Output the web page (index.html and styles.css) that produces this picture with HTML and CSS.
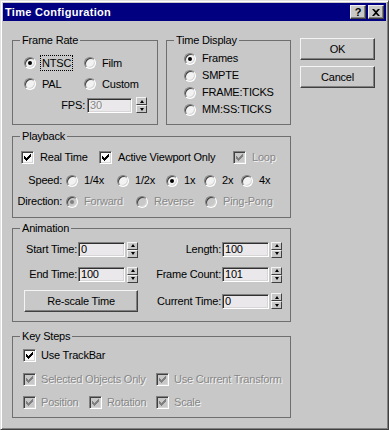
FILE: index.html
```html
<!DOCTYPE html>
<html>
<head>
<meta charset="utf-8">
<link rel="stylesheet" href="styles.css">
</head>
<body>
<div class="win">
  <div class="title">
    <span class="ttl">Time Configuration</span>
    <div class="capbtns">
      <span class="capbtn q">?</span>
      <span class="capbtn"><svg width="8" height="7" viewBox="0 0 8 7"><path d="M0 0h2l2 2 2-2h2L5 3.5 8 7H6L4 5 2 7H0l3-3.5z" fill="#000"/></svg></span>
    </div>
  </div>
  <div class="body">
    <div class="groups">
      <div class="toprow">
        <fieldset class="grp fr">
          <legend>Frame Rate</legend>
          <div class="fr-in">
            <div class="fr-grid">
              <div class="opt"><span class="rad on"></span><span class="focus">NTSC</span></div>
              <div class="opt"><span class="rad"></span><span>Film</span></div>
              <div class="opt"><span class="rad"></span><span>PAL</span></div>
              <div class="opt"><span class="rad"></span><span>Custom</span></div>
            </div>
            <div class="fps">
              <span class="fps-l">FPS:</span>
              <div class="inp w45 dis-t">30</div>
              <div class="spin sp4"><span class="up"></span><span class="dn"></span></div>
            </div>
          </div>
        </fieldset>
        <fieldset class="grp td">
          <legend>Time Display</legend>
          <div class="td-in">
            <div class="opt row17"><span class="rad on"></span><span>Frames</span></div>
            <div class="opt row17"><span class="rad"></span><span>SMPTE</span></div>
            <div class="opt row17"><span class="rad"></span><span>FRAME:TICKS</span></div>
            <div class="opt row17"><span class="rad"></span><span>MM:SS:TICKS</span></div>
          </div>
        </fieldset>
      </div>

      <fieldset class="grp pb">
        <legend>Playback</legend>
        <div class="pb-in">
          <div class="pb-r1">
            <div class="opt g6"><span class="cb"><svg viewBox="0 0 7 7"><path d="M0 2l2 2 5-5v3L2 7 0 5z"/></svg></span><span>Real Time</span></div>
            <div class="opt g6"><span class="cb"><svg viewBox="0 0 7 7"><path d="M0 2l2 2 5-5v3L2 7 0 5z"/></svg></span><span>Active Viewport Only</span></div>
            <div class="opt g6"><span class="cb dis"><svg viewBox="0 0 7 7"><path d="M0 2l2 2 5-5v3L2 7 0 5z"/></svg></span><span class="dis-t">Loop</span></div>
          </div>
          <div class="pb-speed">
            <span class="rl">Speed:</span>
            <div class="opt"><span class="rad"></span><span>1/4x</span></div>
            <div class="opt"><span class="rad"></span><span>1/2x</span></div>
            <div class="opt"><span class="rad on"></span><span>1x</span></div>
            <div class="opt"><span class="rad"></span><span>2x</span></div>
            <div class="opt"><span class="rad"></span><span>4x</span></div>
          </div>
          <div class="pb-dir">
            <span class="rl">Direction:</span>
            <div class="opt"><span class="rad on dis"></span><span class="dis-t">Forward</span></div>
            <div class="opt"><span class="rad dis"></span><span class="dis-t">Reverse</span></div>
            <div class="opt"><span class="rad dis"></span><span class="dis-t">Ping-Pong</span></div>
          </div>
        </div>
      </fieldset>

      <fieldset class="grp an">
        <legend>Animation</legend>
        <div class="an-in">
          <span class="lbl r1">Start Time:</span>
          <div class="inp r1">0</div>
          <div class="spin r1"><span class="up"></span><span class="dn"></span></div>
          <span class="lbl r1">Length:</span>
          <div class="inp r1">100</div>
          <div class="spin r1"><span class="up"></span><span class="dn"></span></div>

          <span class="lbl r3">End Time:</span>
          <div class="inp r3">100</div>
          <div class="spin r3"><span class="up"></span><span class="dn"></span></div>
          <span class="lbl r3">Frame Count:</span>
          <div class="inp r3">101</div>
          <div class="spin r3"><span class="up"></span><span class="dn"></span></div>

          <button class="btn rescale">Re-scale Time</button>
          <span class="lbl r5">Current Time:</span>
          <div class="inp r5">0</div>
          <div class="spin r5"><span class="up"></span><span class="dn"></span></div>
        </div>
      </fieldset>

      <fieldset class="grp ks">
        <legend>Key Steps</legend>
        <div class="ks-in">
          <div class="opt g5 full"><span class="cb"><svg viewBox="0 0 7 7"><path d="M0 2l2 2 5-5v3L2 7 0 5z"/></svg></span><span>Use TrackBar</span></div>
          <div class="opt g5 span2 kr3"><span class="cb dis"><svg viewBox="0 0 7 7"><path d="M0 2l2 2 5-5v3L2 7 0 5z"/></svg></span><span class="dis-t">Selected Objects Only</span></div>
          <div class="opt g5 kr3"><span class="cb dis"><svg viewBox="0 0 7 7"><path d="M0 2l2 2 5-5v3L2 7 0 5z"/></svg></span><span class="dis-t">Use Current Transform</span></div>
          <div class="opt g5 kr5"><span class="cb dis"><svg viewBox="0 0 7 7"><path d="M0 2l2 2 5-5v3L2 7 0 5z"/></svg></span><span class="dis-t">Position</span></div>
          <div class="opt g5 kr5"><span class="cb dis"><svg viewBox="0 0 7 7"><path d="M0 2l2 2 5-5v3L2 7 0 5z"/></svg></span><span class="dis-t">Rotation</span></div>
          <div class="opt g5 kr5"><span class="cb dis"><svg viewBox="0 0 7 7"><path d="M0 2l2 2 5-5v3L2 7 0 5z"/></svg></span><span class="dis-t">Scale</span></div>
        </div>
      </fieldset>
    </div>

    <div class="btncol">
      <button class="btn okb">OK</button>
      <button class="btn okb">Cancel</button>
    </div>
  </div>
</div>
</body>
</html>
```

FILE: styles.css
```css
html, body {
  margin: 0;
  padding: 0;
  background: #c8c8c8;
}
body {
  font-family: "Liberation Sans", Arial, sans-serif;
  font-size: 11px;
  line-height: 13px;
  letter-spacing: -0.2px;
  color: #000;
}
.win {
  width: 389px;
  height: 430px;
  box-sizing: border-box;
  border: 1px solid;
  border-color: #e2e2e2 #404040 #404040 #e2e2e2;
  box-shadow: inset 1px 1px 0 #fff, inset -1px -1px 0 #808080;
  padding: 2px;
  background: #c8c8c8;
}
.title {
  height: 18px;
  background: #000080;
  display: flex;
  align-items: center;
  padding-left: 2px;
  color: #fff;
  font-weight: bold;
  letter-spacing: 0.3px;
}
.ttl { flex: 1; }
.capbtns {
  display: flex;
  gap: 2px;
  margin-right: 2px;
}
.capbtn {
  width: 16px;
  height: 14px;
  box-sizing: border-box;
  background: #c8c8c8;
  border: 1px solid;
  border-color: #f0f0f0 #404040 #404040 #f0f0f0;
  box-shadow: inset -1px -1px 0 #808080;
  display: flex;
  align-items: center;
  justify-content: center;
  color: #000;
  font-size: 11px;
  letter-spacing: 0;
}
.capbtn svg { display: block; }

.body {
  display: flex;
  padding-left: 9px;
}
.groups {
  width: 279px;
  padding-top: 12px;
}
.toprow {
  display: flex;
  gap: 8px;
}
fieldset.grp {
  margin: 0;
  padding: 0;
  border: 1px solid #6f6f6f;
  min-width: 0;
}
legend {
  margin-left: 7px;
  padding: 0 2px;
  line-height: 14px;
}
.fr { width: 146px; box-sizing: border-box; flex: none; }
.td { flex: 1; }
fieldset.pb { margin-top: 4px; }
fieldset.an { margin-top: 3px; }
fieldset.ks { margin-top: 7px; }

.opt {
  display: flex;
  align-items: center;
  gap: 6px;
  white-space: nowrap;
}
.opt.g5 { gap: 5px; }
.focus {
  line-height: 12px;
  outline: 1px dotted #000;
  outline-offset: 1px;
}

.rad {
  width: 12px;
  height: 12px;
  box-sizing: border-box;
  border-radius: 50%;
  border: 1px solid;
  border-color: #808080 #fff #fff #808080;
  box-shadow: inset 1px 1px 0 #404040, inset -1px -1px 0 #d6d6d6;
  background: #f2f2f2;
  position: relative;
  flex: none;
}
.rad.on::after {
  content: "";
  position: absolute;
  left: 3px;
  top: 3px;
  width: 4px;
  height: 4px;
  border-radius: 50%;
  background: #000;
}
.rad.dis { background: #c8c8c8; }
.rad.dis.on::after { background: #808080; }

.cb {
  width: 13px;
  height: 13px;
  box-sizing: border-box;
  border: 1px solid;
  border-color: #808080 #fff #fff #808080;
  box-shadow: inset 1px 1px 0 #404040, inset -1px -1px 0 #d6d6d6;
  background: #f8f8f8;
  display: flex;
  align-items: center;
  justify-content: center;
  color: #000;
  flex: none;
}
.cb svg {
  width: 7px;
  height: 7px;
  display: block;
  fill: currentColor;
  shape-rendering: crispEdges;
}
.cb.dis { background: #c8c8c8; color: #808080; }
.dis-t {
  color: #878787;
  text-shadow: 1px 1px 0 #f4f4f4;
}

.inp {
  box-sizing: border-box;
  height: 15px;
  width: 47px;
  border: 1px solid;
  border-color: #808080 #fff #fff #808080;
  box-shadow: inset 1px 1px 0 #303030, inset -1px -1px 0 #d6d6d6;
  background: #ebe8eb;
  padding-left: 2px;
  display: flex;
  align-items: center;
  font-size: 11px;
}
.inp.w45 { width: 45px; }
.spin {
  width: 11px;
  height: 16px;
  display: flex;
  flex-direction: column;
  flex: none;
}
.spin span {
  flex: 1;
  box-sizing: border-box;
  background: #c8c8c8;
  border: 1px solid;
  border-color: #f4f4f4 #404040 #404040 #f4f4f4;
  display: flex;
  align-items: center;
  justify-content: center;
}
.spin span::after {
  content: "";
  border-left: 2.5px solid transparent;
  border-right: 2.5px solid transparent;
}
.spin .up::after { border-bottom: 3px solid #000; }
.spin .dn::after { border-top: 3px solid #000; }

/* Buttons */
.btn {
  box-sizing: border-box;
  font-family: inherit;
  font-size: 11px;
  letter-spacing: -0.2px;
  color: #000;
  background: #c8c8c8;
  border: 1px solid;
  border-color: #f4f4f4 #404040 #404040 #f4f4f4;
  box-shadow: inset -1px -1px 0 #808080;
  padding: 0;
  margin: 0;
}
.btncol {
  margin-left: 9px;
  padding-top: 17px;
  display: flex;
  flex-direction: column;
  gap: 6px;
}
.okb {
  width: 75px;
  height: 22px;
}

/* Frame rate */
.fr-in {
  padding: 8px 0 11px 11px;
}
.fr-grid {
  display: grid;
  grid-template-columns: 60px auto;
  grid-auto-rows: 16px;
  row-gap: 5px;
}
.fps {
  margin-top: 5px;
  height: 16px;
  display: flex;
  align-items: center;
  justify-content: flex-end;
  margin-right: 10px;
}
.fps-l { margin-right: 2px; }
.sp4 { margin-left: 4px; }

/* Time display */
.td-in {
  padding: 3px 0 0 17px;
}
.row17 { height: 17px; }

/* Playback */
.pb-in {
  padding: 6px 0 7px 8px;
}
.pb-r1 {
  display: grid;
  grid-template-columns: 78px 134px auto;
  height: 17px;
  align-items: center;
}
.pb-speed, .pb-dir {
  display: grid;
  align-items: center;
  height: 17px;
  margin-left: -8px;
}
.pb-speed {
  margin-top: 6px;
  grid-template-columns: 53px 51px 49px 38px 37px auto;
}
.pb-dir {
  margin-top: 4px;
  grid-template-columns: 53px 70px 69px auto;
}
.rl {
  text-align: right;
  padding-right: 4px;
  white-space: nowrap;
}

/* Animation */
.an-in {
  padding: 7px 0 9px 0;
  display: grid;
  grid-template-columns: 65px 47px 13px 84px 47px 13px;
  grid-template-rows: 15px 10px 15px 8px 22px;
  align-items: center;
}
.an-in .lbl {
  text-align: right;
  padding-right: 1px;
  white-space: nowrap;
}
.an-in .spin { margin-left: 2px; height: 16px; }
.an-in .r1 { grid-row: 1; }
.an-in .r3 { grid-row: 3; }
.an-in .r5 { grid-row: 5; }
.an-in .rescale {
  grid-row: 5;
  grid-column: 1 / 4;
  margin-left: 11px;
  width: auto;
  height: 22px;
}

/* Key steps */
.ks-in {
  padding: 4px 0 6px 10px;
  display: grid;
  grid-template-columns: 66px 67px auto;
  grid-template-rows: 17px 7px 17px 6px 17px;
  align-items: center;
}
.ks-in .full { grid-column: 1 / 4; grid-row: 1; }
.ks-in .span2 { grid-column: 1 / 3; }
.ks-in .kr3 { grid-row: 3; }
.ks-in .kr5 { grid-row: 5; }
```
